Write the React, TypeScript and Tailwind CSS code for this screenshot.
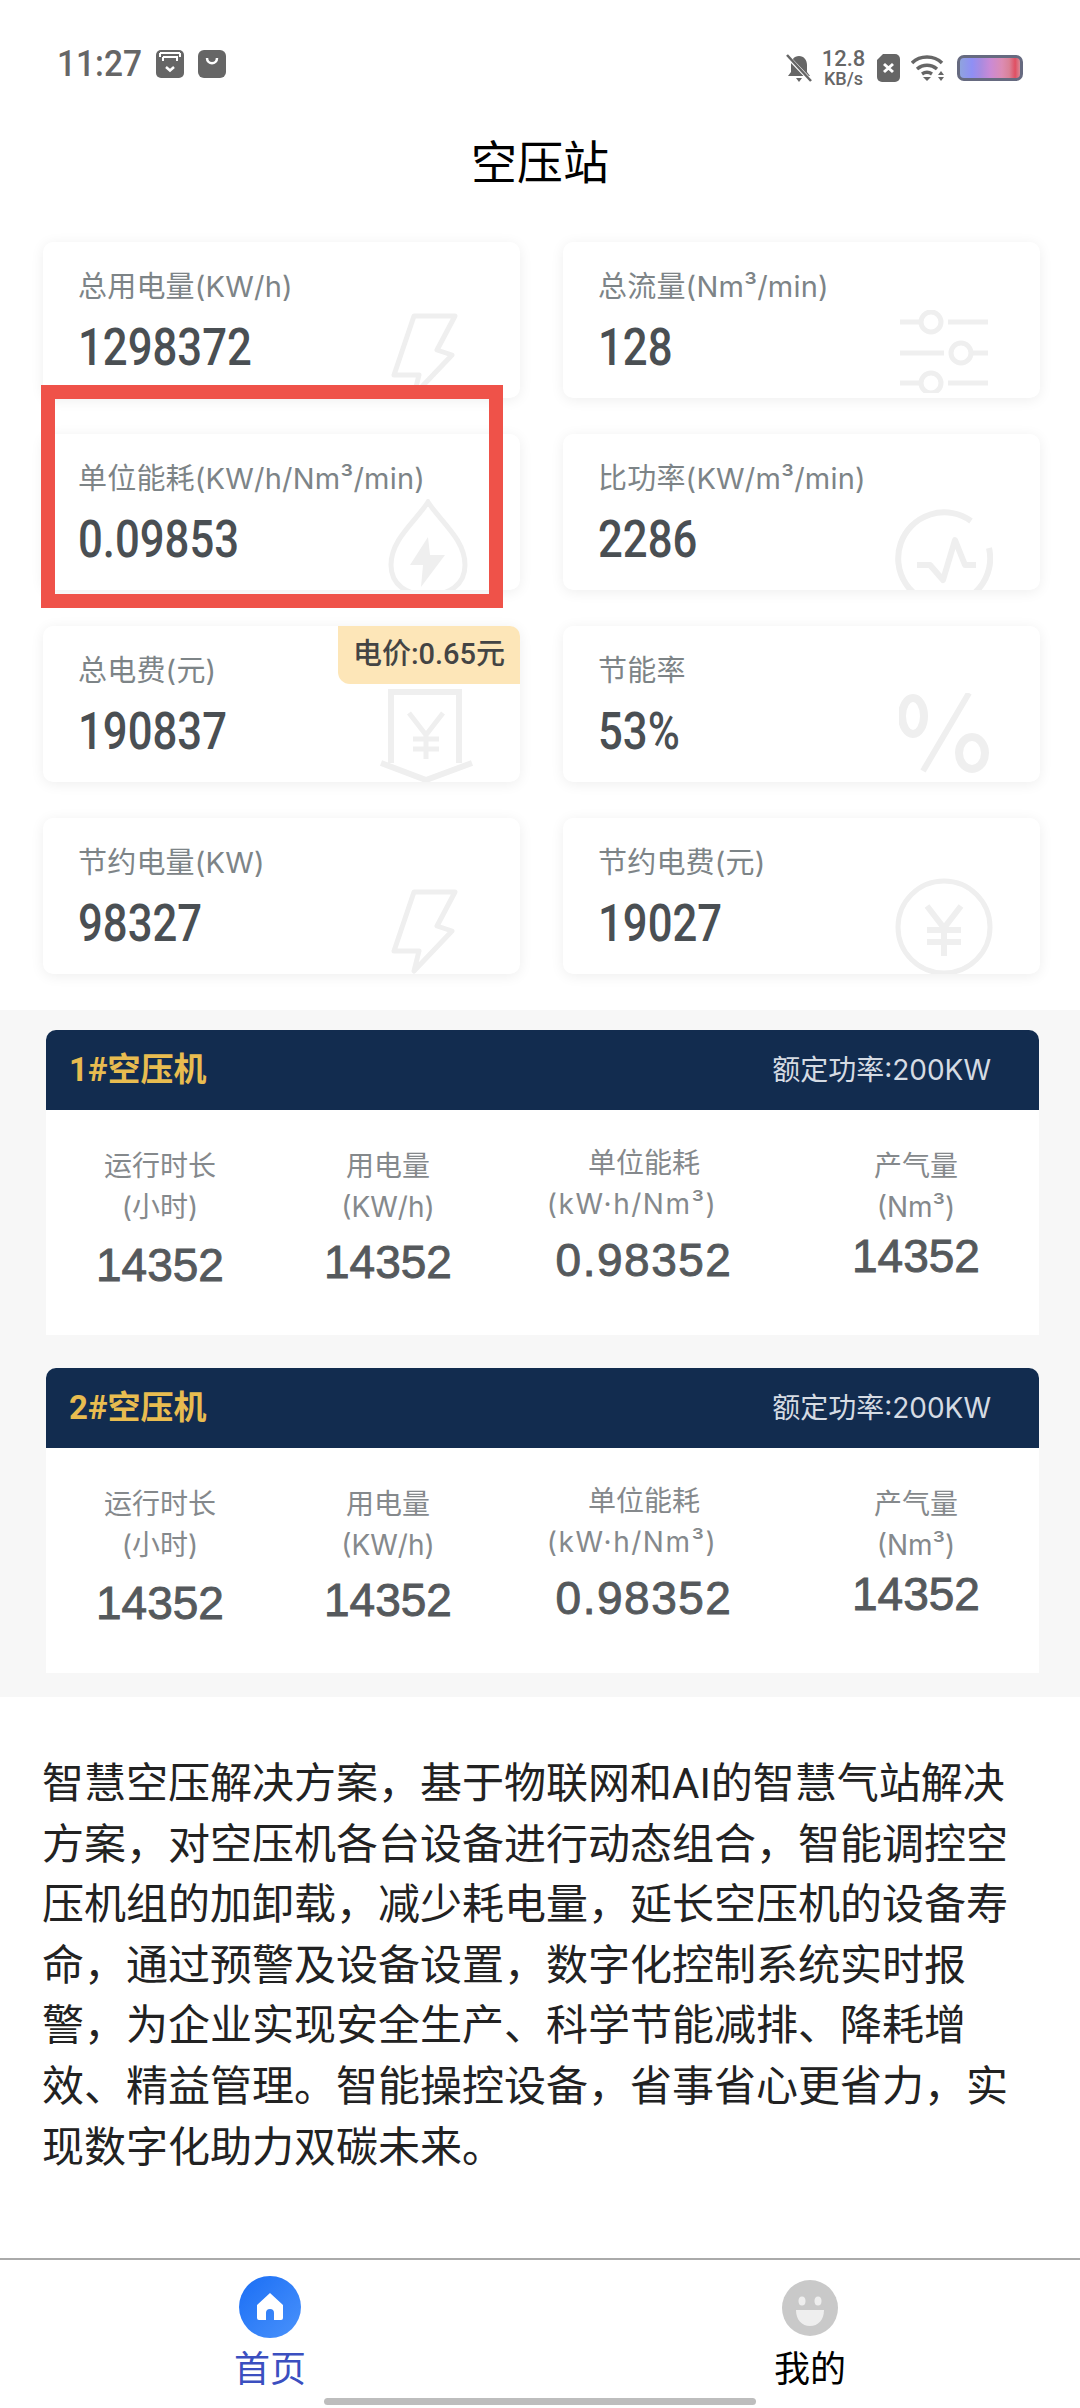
const cards = [
  { label: "总用电量(KW/h)", value: "1298372", icon: "bolt" },
  { label: "总流量(Nm³/min)", value: "128", icon: "sliders" },
  { label: "单位能耗(KW/h/Nm³/min)", value: "0.09853", icon: "drop" },
  { label: "比功率(KW/m³/min)", value: "2286", icon: "pulse" },
  { label: "总电费(元)", value: "190837", icon: "receipt", badge: "电价:0.65元" },
  { label: "节能率", value: "53%", icon: "percent" },
  { label: "节约电量(KW)", value: "98327", icon: "bolt" },
  { label: "节约电费(元)", value: "19027", icon: "yen" },
];

const metrics = [
  { label: "运行时长", unit: "(小时)", unitCls: "", value: "14352", cls: "pt-[39px]", valueCls: "mt-[14px]" },
  { label: "用电量", unit: "(KW/h)", unitCls: "", value: "14352", cls: "pt-[39px]", valueCls: "mt-[11px]" },
  { label: "单位能耗", unit: "(kW·h/Nm³)", unitCls: "mr-[24px] tracking-[1.5px]", value: "0.98352", cls: "pt-[36px]", valueCls: "mt-[12px] tracking-[1.5px]" },
  { label: "产气量", unit: "(Nm³)", unitCls: "", value: "14352", cls: "pt-[39px] pl-[7px]", valueCls: "mt-[5px]" },
];

const paragraph = [
  "智慧空压解决方案，基于物联网和AI的智慧气站解决",
  "方案，对空压机各台设备进行动态组合，智能调控空",
  "压机组的加卸载，减少耗电量，延长空压机的设备寿",
  "命，通过预警及设备设置，数字化控制系统实时报",
  "警，为企业实现安全生产、科学节能减排、降耗增",
  "效、精益管理。智能操控设备，省事省心更省力，实",
  "现数字化助力双碳未来。",
];

// faint watermark drawing in the lower right of each card
function CardIcon({ name }: { name: string }) {
  const base = "absolute text-[#efefef] stroke-current";
  if (name === "bolt")
    return (
      <svg className={`${base} left-[347px] top-[71px] h-[86px] w-[69px]`} viewBox="0 0 69 86" fill="none" strokeWidth="5">
        <path d="M24 3h41L47 37l15 5-38 40 5-20H4Z" strokeLinejoin="round" />
      </svg>
    );
  if (name === "sliders")
    return (
      <svg className={`${base} left-[337px] top-[68px] h-[83px] w-[88px]`} viewBox="0 0 88 83" fill="none" strokeWidth="5">
        <path d="M0 12h20M48 12h40M0 43h44M72 43h16M0 73h20M48 73h40" />
        <circle cx="31" cy="12" r="10" />
        <circle cx="61" cy="43" r="10" />
        <circle cx="31" cy="73" r="10" />
      </svg>
    );
  if (name === "drop")
    return (
      <svg className={`${base} left-[345px] top-[65px] h-[96px] w-[80px]`} viewBox="0 0 80 96" fill="none" strokeWidth="5">
        <path d="M40 3C28 22 3 40 3 66c0 20 16 30 37 30s37-10 37-30C77 40 52 22 40 3Z" />
        <path d="M40 38 22 66h13l-2 22 24-32H42Z" fill="currentColor" stroke="none" />
      </svg>
    );
  if (name === "pulse")
    return (
      <svg className={`${base} left-[332px] top-[74px] h-[98px] w-[98px]`} viewBox="0 0 98 98" fill="none" strokeWidth="6">
        <path d="M76 13A46 46 0 1 0 94 40" />
        <path d="M22 57h13l13 15 12-40 10 25h11" strokeLinejoin="round" />
      </svg>
    );
  if (name === "receipt")
    return (
      <svg className={`${base} left-[336px] top-[63px] h-[95px] w-[95px]`} viewBox="0 0 95 95" fill="none" strokeWidth="6">
        <path d="M12 74V3h68v71" />
        <path d="M2 74 47 91 93 74" />
        <path d="M30 24 47 46 64 24M47 46v24M34 50h26M34 60h26" strokeWidth="5" />
      </svg>
    );
  if (name === "percent")
    return (
      <svg className={`${base} left-[336px] top-[67px] h-[80px] w-[90px]`} viewBox="0 0 90 80" fill="none" strokeWidth="8">
        <ellipse cx="14" cy="23" rx="11" ry="18" />
        <ellipse cx="73" cy="60" rx="13" ry="16" />
        <path d="M70 0 24 78" strokeWidth="6" />
      </svg>
    );
  return (
    <svg className={`${base} left-[332px] top-[60px] h-[98px] w-[98px]`} viewBox="0 0 98 98" fill="none">
      <circle cx="49" cy="49" r="46" strokeWidth="5" />
      <path d="M32 28 49 50 66 28M49 50v28M32 52h34M32 64h34" strokeWidth="6" />
    </svg>
  );
}

function StatusBar() {
  return (
    <div className="flex h-[80px] items-start justify-between pl-[57px] pr-[57px] pt-[49px] text-[#666]">
      <div className="flex items-center">
        <span className="w-[99px] origin-left scale-x-[0.93] text-[36px] font-medium leading-[30px]">11:27</span>
        <svg className="h-[28px] w-[28px]" viewBox="0 0 28 28">
          <rect width="28" height="28" rx="5" fill="#666" />
          <path d="M4 3h20M4 3v4M24 3v4M7 7h14v4M7 7v4" fill="none" stroke="#fff" strokeWidth="2" />
          <path d="m10 17 4 3.5 4-3.5" fill="none" stroke="#fff" strokeWidth="2.5" />
        </svg>
        <svg className="ml-[14px] h-[28px] w-[28px]" viewBox="0 0 28 28">
          <rect width="28" height="28" rx="6" fill="#666" />
          <path d="M9 8c0 7 10 7 10 0" fill="none" stroke="#fff" strokeWidth="2.5" />
        </svg>
      </div>
      <div className="flex items-center">
        <svg className="h-[28px] w-[26px]" viewBox="0 0 26 28">
          <path d="M13 2c5 0 8 4 8 9v7l3 4H2l3-4v-7c0-5 3-9 8-9ZM10 24h6l-3 4Z" fill="#666" />
          <path d="M1 2l24 25" stroke="#fff" strokeWidth="4" />
          <path d="M1 1l24 26" stroke="#666" strokeWidth="2.5" />
        </svg>
        <div className="ml-[11px] flex w-[41px] flex-col items-center">
          <span className="text-[22px] font-medium leading-[20px]">12.8</span>
          <span className="mt-[2px] text-[18px] font-medium leading-[16px]">KB/s</span>
        </div>
        <svg className="ml-[13px] h-[28px] w-[23px]" viewBox="0 0 23 28">
          <path d="M6 0h12a5 5 0 0 1 5 5v18a5 5 0 0 1-5 5H5a5 5 0 0 1-5-5V6Z" fill="#666" />
          <path d="m7 10 9 8M16 10l-9 8" stroke="#fff" strokeWidth="3" />
        </svg>
        <svg className="ml-[11px] h-[28px] w-[34px]" viewBox="0 0 34 28" fill="none" stroke="#666" strokeWidth="3.5">
          <path d="M1 9c8-8 22-8 30 0M6 15c6-5 14-5 20 0M11 20c3-2 7-2 10 0" />
          <path d="m12 23 4 4 4-4ZM27 21l3-4 3 4ZM27 23l3 4 3-4Z" fill="#666" stroke="none" />
        </svg>
        <div className="ml-[12px] h-[26px] w-[66px] rounded-[7px] border-[3px] border-[#666a80] bg-[linear-gradient(90deg,#8fa3de_0%,#8f8ff5_20%,#a98be0_35%,#c98ad6_50%,#dc8cb4_70%,#d98298_82%,#e04f62_92%,#d88a98_100%)]" />
      </div>
    </div>
  );
}

function StatCard({ card }: { card: (typeof cards)[number] }) {
  return (
    <div className="relative h-[156px] overflow-hidden rounded-[10px] bg-white pl-[35px] pt-[28px] shadow-[0_2px_14px_rgba(0,0,0,0.07)]">
      <CardIcon name={card.icon} />
      <div className="relative font-['Inter','Noto_Sans_CJK_SC',sans-serif] text-[29px] leading-[34px] tracking-[0.2px] text-[#7d8487]">{card.label}</div>
      <div className="relative mt-[15px] origin-left scale-x-[0.84] text-[52px] font-medium leading-[58px] text-[#4a4f53]">{card.value}</div>
      {card.badge && (
        <div className="absolute right-0 top-0 flex h-[58px] w-[182px] items-center justify-center rounded-bl-[12px] bg-[#fde6b8] text-[29px] font-medium text-[#444]">
          {card.badge}
        </div>
      )}
    </div>
  );
}

function PanelCard({ name }: { name: string }) {
  return (
    <div className="h-[305px] overflow-hidden rounded-t-[10px] bg-white">
      <div className="flex h-[80px] items-center justify-between bg-[#122c4f] pl-[23px] pr-[48px]">
        <span className="text-[33px] font-bold text-[#e8bc50]">{name}</span>
        <span className="font-['Inter','Noto_Sans_CJK_SC',sans-serif] text-[28px] text-[#d5dbe3]">额定功率:200KW</span>
      </div>
      <div className="grid grid-cols-[228px_228px_284px_253px]">
        {metrics.map((m) => (
          <div key={m.label} className={`flex flex-col items-center ${m.cls}`}>
            <span className="text-[28px] leading-[36px] text-[#85898c]">{m.label}</span>
            <span className={`mt-[4px] whitespace-nowrap font-['Inter','Noto_Sans_CJK_SC',sans-serif] text-[28px] leading-[36px] text-[#85898c] ${m.unitCls}`}>{m.unit}</span>
            <span className={`font-['Liberation_Sans',sans-serif] text-[46px] leading-[52px] text-[#55595c] [-webkit-text-stroke:0.9px_#55595c] ${m.valueCls}`}>{m.value}</span>
          </div>
        ))}
      </div>
    </div>
  );
}

export default function App() {
  return (
    <div className="relative flex h-[2408px] w-[1080px] flex-col overflow-hidden bg-white font-['Roboto','Noto_Sans_CJK_SC',sans-serif]">
      <StatusBar />
      <div className="flex h-[162px] items-start justify-center pt-[53px] text-[46px] leading-[60px] text-black">空压站</div>

      <div className="grid grid-cols-[477px_477px] gap-x-[43px] gap-y-[36px] px-[43px]">
        {cards.map((c) => (
          <StatCard key={c.label} card={c} />
        ))}
      </div>

      {/* red highlight drawn over the third card */}
      <div className="absolute left-[41px] top-[385px] h-[223px] w-[462px] border-[14px] border-[#ef5249]" />

      <div className="mt-[36px] flex flex-col gap-[33px] bg-[#f7f7f7] pb-[24px] pl-[46px] pr-[41px] pt-[20px]">
        <PanelCard name="1#空压机" />
        <PanelCard name="2#空压机" />
      </div>

      <div className="pl-[42px] pr-[43px] pt-[57px] text-[42px] leading-[60.6px] text-[#222]">
        {paragraph.map((line) => (
          <div key={line} className="whitespace-nowrap">{line}</div>
        ))}
      </div>

      <div className="mt-auto flex h-[150px] border-t-2 border-[#aaa]">
        <div className="flex flex-1 flex-col items-center pt-[16px]">
          <svg className="h-[62px] w-[62px]" viewBox="0 0 62 62">
            <defs>
              <linearGradient id="homeBlue" x1="0" y1="0" x2="1" y2="1">
                <stop offset="0" stopColor="#1a6ef5" />
                <stop offset="1" stopColor="#4a92fb" />
              </linearGradient>
            </defs>
            <circle cx="31" cy="31" r="31" fill="url(#homeBlue)" />
            <path d="M31 17 18 29v13a2 2 0 0 0 2 2h7V37a4 4 0 0 1 8 0v7h7a2 2 0 0 0 2-2V29Z" fill="#fff" />
          </svg>
          <span className="mt-[10px] text-[36px] leading-[44px] text-[#3b4fc0]">首页</span>
        </div>
        <div className="flex flex-1 flex-col items-center pt-[20px]">
          <svg className="h-[56px] w-[56px]" viewBox="0 0 56 56">
            <circle cx="28" cy="28" r="28" fill="#c9c9c9" />
            <ellipse cx="20" cy="21" rx="3.5" ry="4.5" fill="#eee" />
            <ellipse cx="36" cy="21" rx="3.5" ry="4.5" fill="#eee" />
            <path d="M14 30h28c0 10-6 16-14 16s-14-6-14-16Z" fill="#eee" />
          </svg>
          <span className="mt-[12px] text-[36px] leading-[44px] text-black">我的</span>
        </div>
      </div>
      {/* gesture handle sits over the tab bar */}
      <div className="absolute bottom-[3px] left-[324px] h-[7px] w-[432px] rounded-full bg-[#bdbdbd]" />
    </div>
  );
}
